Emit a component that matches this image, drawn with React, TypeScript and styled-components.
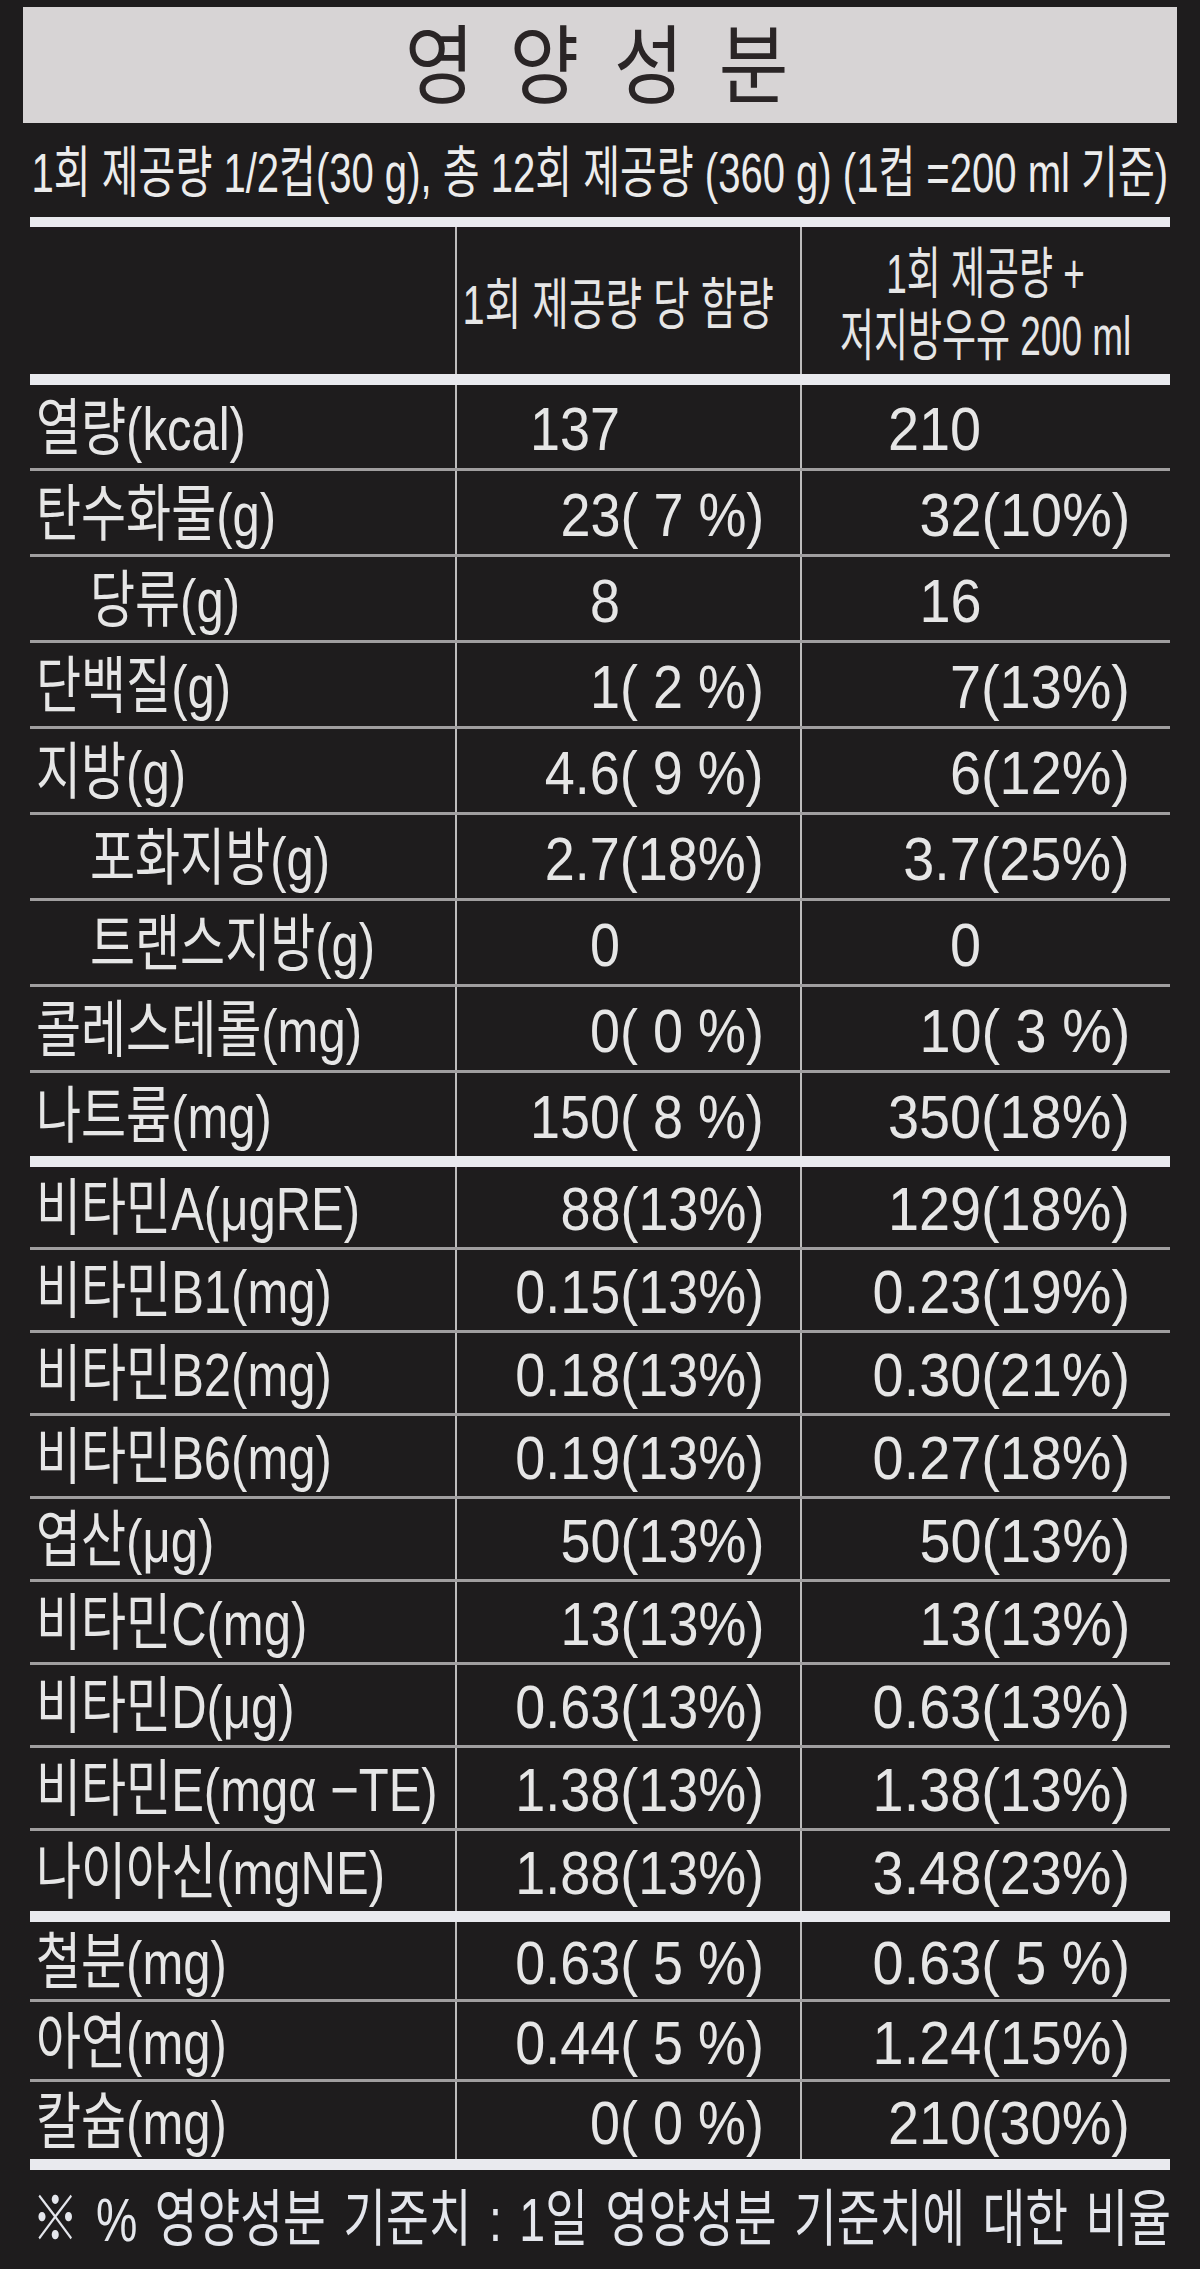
import React from 'react';
import styled, { createGlobalStyle } from 'styled-components';

const GlobalStyle = createGlobalStyle`
  html, body {
    margin: 0;
    padding: 0;
    background: #1e1c1d;
  }
`;

type Row = { label: string; indent?: boolean; a: string; b: string };
type Group = { height: number; rows: Row[] };

const groups: Group[] = [
  {
    height: 83,
    rows: [
      { label: '열량(kcal)', a: '137', b: '210' },
      { label: '탄수화물(g)', a: '23( 7 %)', b: '32(10%)' },
      { label: '당류(g)', indent: true, a: '8', b: '16' },
      { label: '단백질(g)', a: '1( 2 %)', b: '7(13%)' },
      { label: '지방(g)', a: '4.6( 9 %)', b: '6(12%)' },
      { label: '포화지방(g)', indent: true, a: '2.7(18%)', b: '3.7(25%)' },
      { label: '트랜스지방(g)', indent: true, a: '0', b: '0' },
      { label: '콜레스테롤(mg)', a: '0( 0 %)', b: '10( 3 %)' },
      { label: '나트륨(mg)', a: '150( 8 %)', b: '350(18%)' },
    ],
  },
  {
    height: 80,
    rows: [
      { label: '비타민A(μgRE)', a: '88(13%)', b: '129(18%)' },
      { label: '비타민B1(mg)', a: '0.15(13%)', b: '0.23(19%)' },
      { label: '비타민B2(mg)', a: '0.18(13%)', b: '0.30(21%)' },
      { label: '비타민B6(mg)', a: '0.19(13%)', b: '0.27(18%)' },
      { label: '엽산(μg)', a: '50(13%)', b: '50(13%)' },
      { label: '비타민C(mg)', a: '13(13%)', b: '13(13%)' },
      { label: '비타민D(μg)', a: '0.63(13%)', b: '0.63(13%)' },
      { label: '비타민E(mgα −TE)', a: '1.38(13%)', b: '1.38(13%)' },
      { label: '나이아신(mgNE)', a: '1.88(13%)', b: '3.48(23%)' },
    ],
  },
  {
    height: 77,
    rows: [
      { label: '철분(mg)', a: '0.63( 5 %)', b: '0.63( 5 %)' },
      { label: '아연(mg)', a: '0.44( 5 %)', b: '1.24(15%)' },
      { label: '칼슘(mg)', a: '0( 0 %)', b: '210(30%)' },
    ],
  },
];

const Value = ({ text, scale }: { text: string; scale: number }) => {
  const i = text.indexOf('(');
  const num = i < 0 ? text : text.slice(0, i);
  const pct = i < 0 ? null : text.slice(i);
  return (
    <Squeeze $scale={scale} $origin="right">
      {num}
      {pct ? <span>{pct}</span> : <Ghost>(13%)</Ghost>}
    </Squeeze>
  );
};

const App = () => {
  return (
    <Page>
      <GlobalStyle />
      <TitleBar>
        <Squeeze $scale={0.88} $origin="center">영 양 성 분</Squeeze>
      </TitleBar>
      <Serving>
        <Squeeze $scale={0.715} $origin="center">
          1회 제공량 1/2컵(30 g), 총 12회 제공량 (360 g) (1컵 =200 ml 기준)
        </Squeeze>
      </Serving>
      <Table>
        <Rule />
        <HeaderRow>
          <HeadCell />
          <HeadCell $line $shift={-10}>
            <Squeeze $scale={0.71} $origin="center">1회 제공량 당 함량</Squeeze>
          </HeadCell>
          <HeadCell $line>
            <HeadStack>
              <Squeeze $scale={0.66} $origin="center">1회 제공량 +</Squeeze>
              <Squeeze $scale={0.66} $origin="center">저지방우유 200 ml</Squeeze>
            </HeadStack>
          </HeadCell>
        </HeaderRow>
        <Rule $thick={11} />
        {groups.map((g, gi) => (
          <React.Fragment key={gi}>
            {g.rows.map((r, ri) => (
              <DataRow key={r.label} $height={g.height} $last={ri === g.rows.length - 1}>
                <LabelCell $indent={r.indent}>
                  <Squeeze $scale={0.79} $origin="left">{r.label}</Squeeze>
                </LabelCell>
                <ValueCell $pad={36}>
                  <Value text={r.a} scale={0.87} />
                </ValueCell>
                <ValueCell $pad={40}>
                  <Value text={r.b} scale={0.9} />
                </ValueCell>
              </DataRow>
            ))}
            <Rule $thick={11} />
          </React.Fragment>
        ))}
      </Table>
      <Footnote>
        <Squeeze $scale={0.75} $origin="left">
          ※ % 영양성분 기준치 : 1일 영양성분 기준치에 대한 비율
        </Squeeze>
      </Footnote>
    </Page>
  );
};

export default App;

const Page = styled.main`
  width: 1200px;
  min-height: 2269px;
  box-sizing: border-box;
  padding: 7px 23px 0;
  background: #1e1c1d;
  color: #e6e6e6;
  font-family: 'Liberation Sans', 'Noto Sans CJK KR', sans-serif;
  overflow: hidden;
`;

const Squeeze = styled.span<{ $scale: number; $origin: string }>`
  display: inline-block;
  white-space: pre;
  transform: scaleX(${(p) => p.$scale});
  transform-origin: ${(p) => p.$origin} center;
`;

const Ghost = styled.span`
  visibility: hidden;
`;

const TitleBar = styled.div`
  height: 116px;
  background: #d7d4d5;
  color: #2a2526;
  display: flex;
  align-items: center;
  justify-content: center;
  font-size: 86px;
  font-weight: 400;
  letter-spacing: 8px;
  line-height: 1;
  padding-top: 4px;
  box-sizing: border-box;
`;

const Serving = styled.div`
  height: 94px;
  display: flex;
  align-items: center;
  justify-content: center;
  font-size: 56px;
  line-height: 1;
  padding-top: 6px;
  box-sizing: border-box;
  color: #ececec;
`;

const Table = styled.section`
  margin: 0 7px;
`;

const Rule = styled.div<{ $thick?: number }>`
  height: ${(p) => p.$thick ?? 10}px;
  background: #e9eaee;
`;

const columns = '425px 345px minmax(0, 1fr)';

const HeaderRow = styled.div`
  display: grid;
  grid-template-columns: ${columns};
  height: 147px;
  font-size: 56px;
  line-height: 1;
`;

const HeadCell = styled.div<{ $line?: boolean; $shift?: number }>`
  display: flex;
  align-items: center;
  justify-content: center;
  min-width: 0;
  border-left: ${(p) => (p.$line ? '2px solid #bdbcbc' : 'none')};
  padding-top: 8px;
  padding-right: ${(p) => -(p.$shift ?? 0) * 2}px;
`;

const HeadStack = styled.div`
  display: flex;
  flex-direction: column;
  align-items: center;
  gap: 6px;
`;

const DataRow = styled.div<{ $height: number; $last: boolean }>`
  display: grid;
  grid-template-columns: ${columns};
  height: ${(p) => p.$height + (p.$last ? 0 : 3)}px;
  box-sizing: border-box;
  border-bottom: ${(p) => (p.$last ? 'none' : '3px solid #a09e9f')};
  font-size: 62px;
  line-height: 1;
`;

const LabelCell = styled.div<{ $indent?: boolean }>`
  display: flex;
  align-items: center;
  min-width: 0;
  padding-left: ${(p) => (p.$indent ? 60 : 6)}px;
  padding-top: 4px;
`;

const ValueCell = styled.div<{ $pad: number }>`
  display: flex;
  align-items: center;
  justify-content: flex-end;
  min-width: 0;
  padding-right: ${(p) => p.$pad}px;
  padding-top: 4px;
  border-left: 2px solid #bdbcbc;
`;

const Footnote = styled.div`
  height: 99px;
  display: flex;
  align-items: center;
  padding-left: 9px;
  font-size: 62px;
  word-spacing: 6px;
  line-height: 1;
  color: #e4e6ec;
`;
